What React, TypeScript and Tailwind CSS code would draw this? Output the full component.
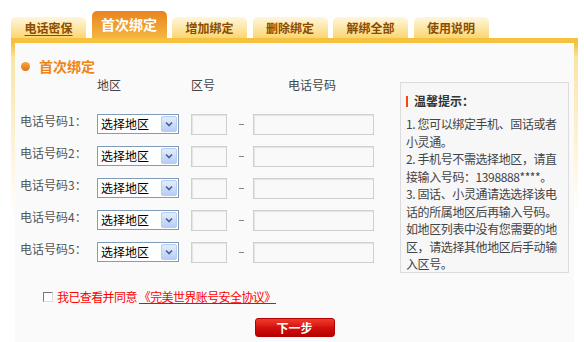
const tabs = ["电话密保", "首次绑定", "增加绑定", "删除绑定", "解绑全部", "使用说明"];

const tips = [
  "1. 您可以绑定手机、固话或者",
  "小灵通。",
  "2. 手机号不需选择地区，请直",
  "接输入号码：1398888****。",
  "3. 固话、小灵通请选选择该电",
  "话的所属地区后再输入号码。",
  "如地区列表中没有您需要的地",
  "区，请选择其他地区后手动输",
  "入区号。",
];

const AreaSelect = () => (
  <div className="flex h-[20px] w-[82px] items-center border border-[#7f9db9] bg-white pl-[3px] pr-[1px]">
    <span className="flex-1 text-[12px] leading-[14px] text-black">选择地区</span>
    <span className="flex h-[16px] w-[16px] items-center justify-center rounded-[2px] border border-[#b9cbef] bg-gradient-to-b from-[#e3ecfd] to-[#b7cdf6]">
      <svg width="8" height="6" viewBox="0 0 8 6">
        <path d="M1 1.5 L4 4.5 L7 1.5" fill="none" stroke="#4d6185" strokeWidth="1.6" />
      </svg>
    </span>
  </div>
);

const Field = ({ w }: { w: string }) => (
  <div className={`${w} h-[21px] border border-[#cfcfcf] bg-[#f9f9f9] shadow-[inset_1px_1px_1px_#e4e4e4]`} />
);

export default function App() {
  return (
    <div className="h-[342px] w-[584px] overflow-hidden bg-white pt-[11px] font-['Noto_Sans_CJK_SC','Noto_Sans',sans-serif]">
      {/* tabs */}
      <div className="ml-[11px] flex h-[27px] items-end gap-[5.5px]">
        {tabs.map((t, i) =>
          i === 1 ? (
            <div
              key={t}
              className="flex h-[27px] w-[75px] items-start justify-center rounded-t-[5px] bg-gradient-to-b from-[#e9831d] to-[#f5b540] pt-[4px] text-[14px] font-bold leading-[18px] text-white"
            >
              {t}
            </div>
          ) : (
            <div
              key={t}
              className={`flex h-[21px] w-[75px] items-center justify-center rounded-t-[5px] bg-gradient-to-b from-[#fff6dc] to-[#fbd66e] pt-[1px] text-[12px] font-bold text-[#8c4c00] ${
                i === 0 ? "underline underline-offset-2" : ""
              }`}
            >
              {t}
            </div>
          )
        )}
      </div>

      {/* panel */}
      <div className="ml-[11px] w-[567px] bg-[linear-gradient(#f5c13f_0px,#f5c13f_5px,#fbe4a6_20px,#ffffff_180px)] px-[4px] pt-[5px]">
        <div className="h-[299px] bg-[#fafafa] pl-[5px] pt-[16px]">
          <div className="flex h-[14px] items-center">
            <span className="ml-[1px] h-[9px] w-[9px] rounded-full bg-gradient-to-b from-[#f8a540] to-[#e5700c]" />
            <span className="ml-[9px] text-[14px] font-bold leading-[14px] text-[#ef8413]">首次绑定</span>
          </div>

          <div className="mt-[6px] flex items-start">
            {/* form */}
            <div className="w-[359px] text-[12px] text-[#444]">
              <div className="flex h-[12px] items-center leading-[12px]">
                <span className="ml-[77px] w-[94px]">地区</span>
                <span className="w-[97px]">区号</span>
                <span>电话号码</span>
              </div>
              <div className="mt-[23px] flex flex-col gap-[11px]">
                {[1, 2, 3, 4, 5].map((n) => (
                  <div key={n} className="flex h-[21px] items-start">
                    <span className="w-[77px] leading-[14px] text-[#555]">电话号码{n}：</span>
                    <AreaSelect />
                    <div className="ml-[12px]">
                      <Field w="w-[36px]" />
                    </div>
                    <span className="ml-[12px] mt-[10px] h-[1px] w-[5px] bg-[#888]" />
                    <div className="ml-[9px]">
                      <Field w="w-[121px]" />
                    </div>
                  </div>
                ))}
              </div>
            </div>

            {/* tips */}
            <div className="ml-[21px] mt-[3px] h-[191px] w-[169px] border border-[#dcdcdc] bg-[#f7f7f7] pl-[5px] pt-[9px]">
              <div className="flex h-[18px] items-center">
                <span className="h-[11px] w-[2px] bg-[#f04a10]" />
                <span className="ml-[6px] text-[12px] font-bold text-[#333]">温馨提示：</span>
              </div>
              <div className="mt-[5px] text-[12px] leading-[17.5px] tracking-[-0.4px] whitespace-nowrap text-[#444]">
                {tips.map((l) => (
                  <div key={l}>{l}</div>
                ))}
              </div>
            </div>
          </div>

          <div className="ml-[23px] mt-[18px] flex h-[12px] items-center text-[12px] tracking-[-0.6px] text-[#ff0000]">
            <span className="h-[10px] w-[10px] border border-t-[#777] border-l-[#777] border-r-[#ddd] border-b-[#ddd] bg-white" />
            <span className="ml-[4px] leading-[12px]">我已查看并同意</span>
            <span className="ml-[2px] border-b border-[#ff0000] leading-[13px]">《完美世界账号安全协议》</span>
          </div>

          <div className="mt-[15px] flex justify-center pr-[5px]">
            <button className="h-[19px] w-[80px] rounded-[3px] border border-[#b50000] bg-gradient-to-b from-[#f03a2a] via-[#d40f0f] to-[#b80000] text-[12px] font-bold leading-[17px] text-white">
              下一步
            </button>
          </div>
        </div>
      </div>
    </div>
  );
}
